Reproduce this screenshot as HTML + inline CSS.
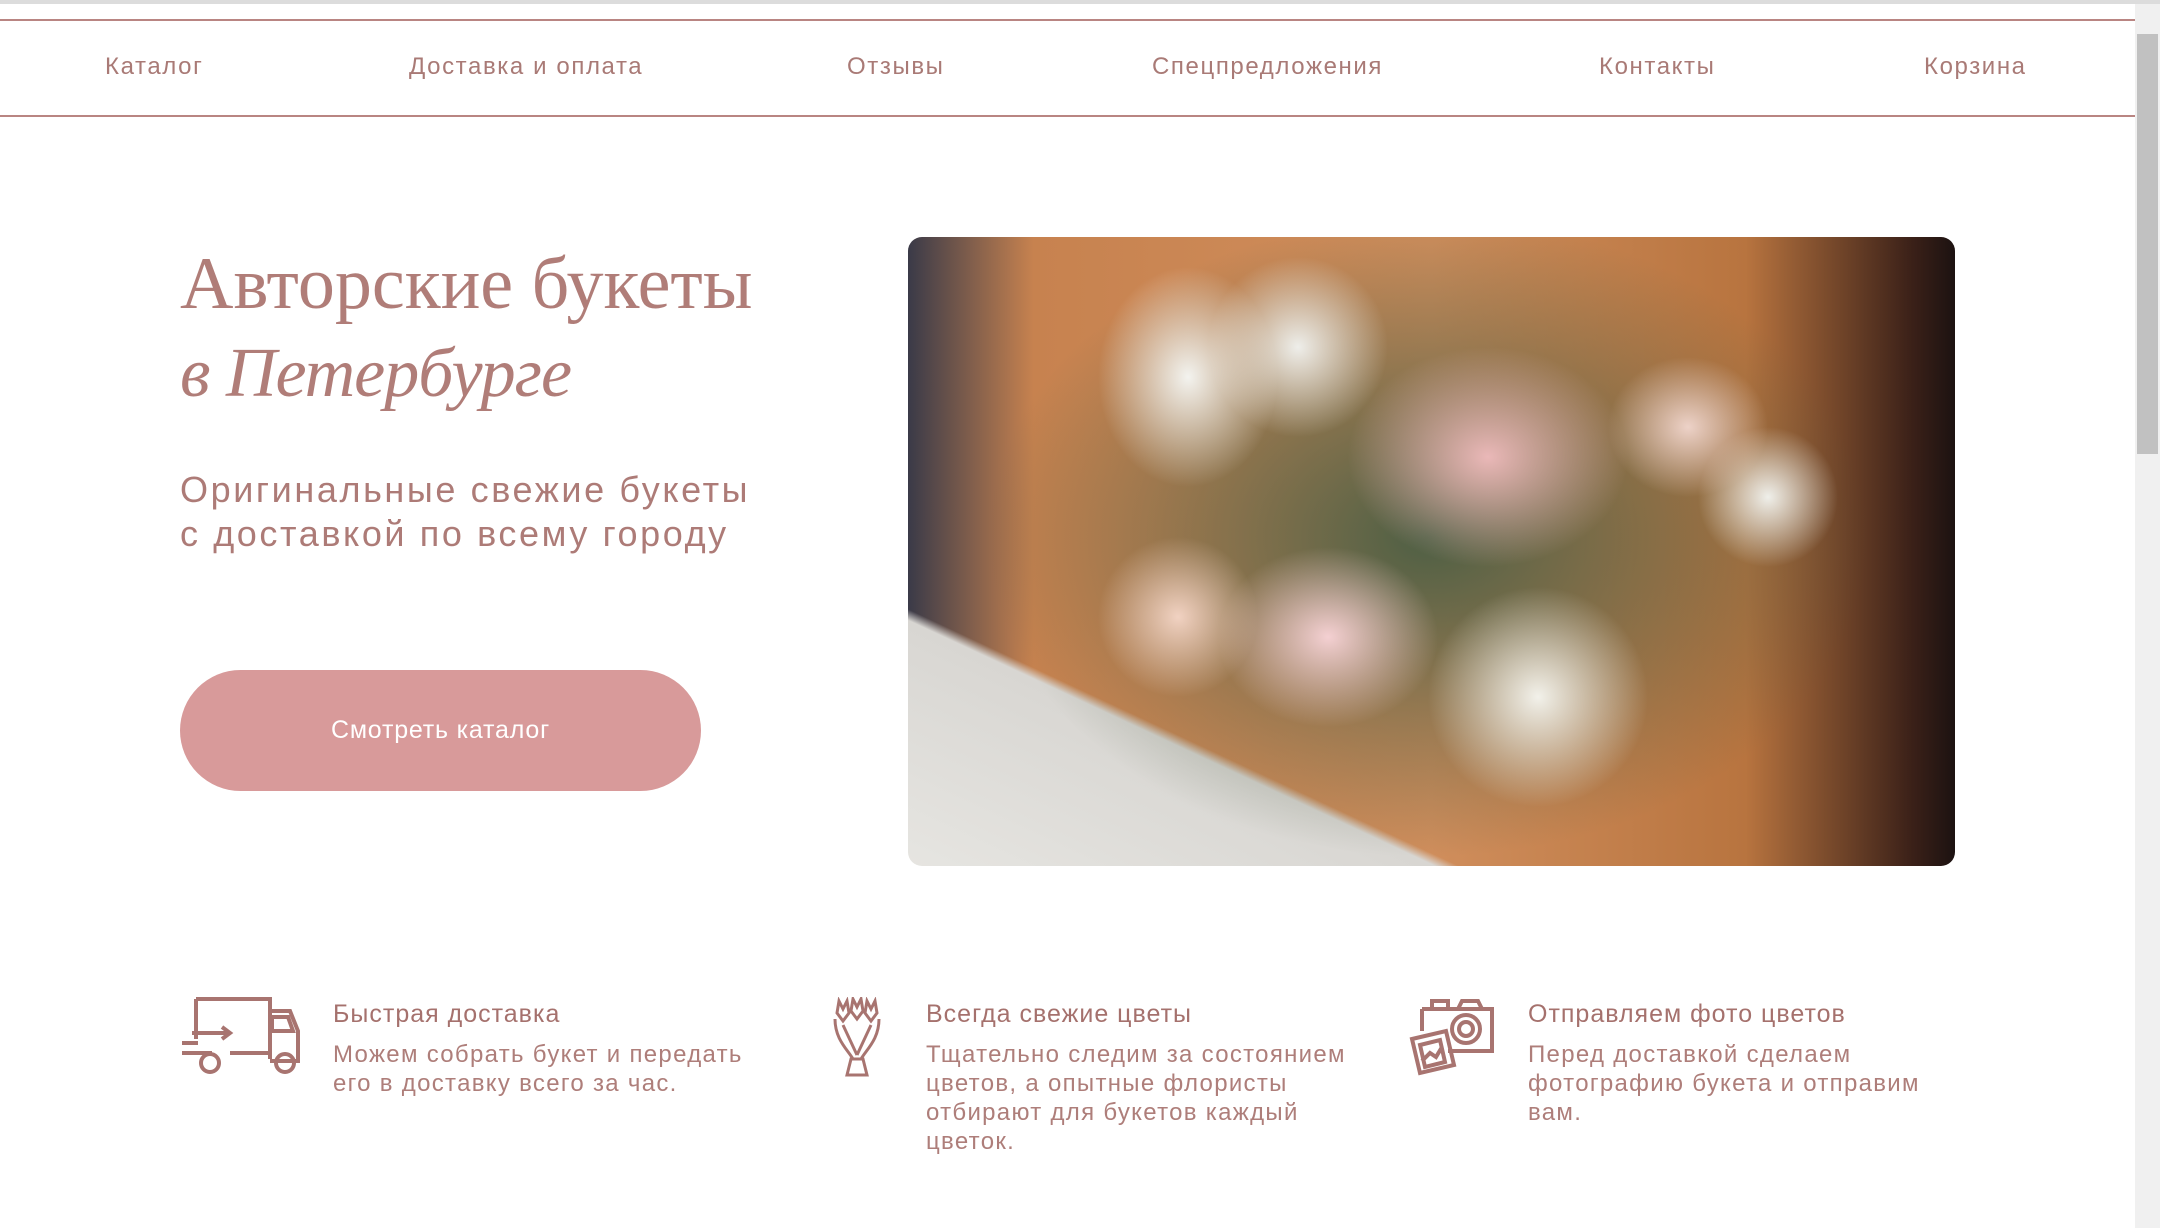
<!DOCTYPE html>
<html><head><meta charset="utf-8"><style>
*{margin:0;padding:0;box-sizing:border-box}
html,body{width:2160px;height:1228px;overflow:hidden;background:#fff;font-family:"Liberation Sans",sans-serif;color:#ad7b77}
.topbar{position:absolute;left:0;top:0;width:2160px;height:4px;background:#dcdcdc}
.nav{position:absolute;left:0;top:19px;width:2135px;height:98px;border-top:2px solid #b98582;border-bottom:2px solid #b98582}
.nav span{position:absolute;top:32px;font-size:24px;color:#a97a76;white-space:nowrap;letter-spacing:1.6px}
.sb{position:absolute;right:0;top:4px;width:25px;height:1224px;background:#f0f0f0}
.thumb{position:absolute;right:2px;top:30px;width:21px;height:420px;background:#c1c1c1}
h1{position:absolute;left:180px;top:240px;font-family:"Liberation Serif",serif;font-weight:normal;font-size:74px;line-height:88px;color:#b07d78;white-space:nowrap}
h1 i{font-size:70px;letter-spacing:-1px}
.sub{position:absolute;left:180px;top:468px;font-size:36px;line-height:44px;color:#ad7b77;letter-spacing:2.6px;white-space:nowrap}
.btn{position:absolute;left:180px;top:670px;width:521px;height:121px;border-radius:61px;background:#d89a9a;color:#fff;font-size:25px;text-align:center;line-height:121px;letter-spacing:.8px}
.img{position:absolute;left:908px;top:237px;width:1047px;height:629px;border-radius:14px;overflow:hidden;
background:
radial-gradient(ellipse 110px 90px at 420px 400px,#f4d0d2,rgba(244,208,210,0) 100%),
radial-gradient(ellipse 140px 110px at 580px 220px,#eab8b8,rgba(234,184,184,0) 100%),
radial-gradient(ellipse 110px 110px at 630px 460px,#f2f1ea,rgba(242,241,234,0) 100%),
radial-gradient(ellipse 90px 110px at 280px 140px,#f3f3ef,rgba(243,243,239,0) 100%),
radial-gradient(ellipse 90px 90px at 390px 110px,#eeeeea,rgba(238,238,234,0) 100%),
radial-gradient(ellipse 80px 80px at 270px 380px,#f1d2c2,rgba(241,210,194,0) 100%),
radial-gradient(ellipse 80px 70px at 780px 190px,#edd2c8,rgba(237,210,200,0) 100%),
radial-gradient(ellipse 70px 70px at 860px 260px,#efefea,rgba(239,239,234,0) 100%),
radial-gradient(ellipse 440px 320px at 520px 300px,#4e5f44,rgba(70,85,60,0) 100%),
linear-gradient(25deg,#e6e5e1 0%,#d8d6d2 22%,rgba(0,0,0,0) 23%),
linear-gradient(90deg,#3a3a48 0%,#c7824f 12%,#d08e5c 50%,#b8743f 80%,#3a2018 96%,#1c1211 100%)}
.f{position:absolute;top:1000px}
.f h3{position:absolute;top:0;font-weight:normal;font-size:25px;color:#a5716d;white-space:nowrap;letter-spacing:1px}
.f p{position:absolute;top:40px;font-size:24px;line-height:29px;color:#ae7e7a;letter-spacing:1.3px}
</style></head><body>
<div class="topbar"></div>
<div class="nav">
<span style="left:105px">Каталог</span>
<span style="left:409px">Доставка и оплата</span>
<span style="left:847px">Отзывы</span>
<span style="left:1152px">Спецпредложения</span>
<span style="left:1599px">Контакты</span>
<span style="left:1924px">Корзина</span>
</div>
<div class="sb"><div class="thumb"></div></div>
<h1>Авторские букеты<br><i>в Петербурге</i></h1>
<div class="sub">Оригинальные свежие букеты<br>с доставкой по всему городу</div>
<div class="btn">Смотреть каталог</div>
<div class="img"></div>

<svg style="position:absolute;left:180px;top:997px" width="124" height="80" viewBox="0 0 124 80" fill="none" stroke="#a87470" stroke-width="4">
<path d="M16 2h74v60M16 2v40M90 14h20l8 20v30h-28M92 20h16l5 14h-21z"/>
<path d="M12 36h36M42 30l8 6-8 6M2 46h16M2 56h30M50 56h40"/>
<circle cx="30" cy="66" r="9"/><circle cx="105" cy="66" r="9"/>
</svg>
<svg style="position:absolute;left:831px;top:997px" width="52" height="80" viewBox="0 0 52 80" fill="none" stroke="#a87470" stroke-width="3">
<path d="M8 4l4 8 4-8 2 12-6 8-6-8zM22 2l4 8 4-8 2 12-6 8-6-8zM36 4l4 8 4-8 2 12-6 8-6-8z"/>
<path d="M4 22c0 20 12 30 18 40M48 22c0 20-12 30-18 40M12 28l14 30M40 28l-14 30M20 62h12l4 16H16z"/>
</svg>
<svg style="position:absolute;left:1408px;top:997px" width="90" height="80" viewBox="0 0 90 80" fill="none" stroke="#a87470" stroke-width="4">
<path d="M14 12h70v42H40M14 12v22M24 12V4h16v8M50 12l4-8h16l4 8"/>
<circle cx="58" cy="32" r="14"/><circle cx="58" cy="32" r="7"/>
<path d="M4 42l34-8 8 34-34 8z M12 48l20-5 5 22-20 5z M14 64l8-8 6 4 6-10"/>
</svg>

<div class="f" style="left:333px"><h3>Быстрая доставка</h3><p style="width:440px">Можем собрать букет и передать его в доставку всего за час.</p></div>
<div class="f" style="left:926px"><h3>Всегда свежие цветы</h3><p style="width:450px">Тщательно следим за состоянием цветов, а опытные флористы отбирают для букетов каждый цветок.</p></div>
<div class="f" style="left:1528px"><h3>Отправляем фото цветов</h3><p style="width:420px">Перед доставкой сделаем фотографию букета и отправим вам.</p></div>
</body></html>
